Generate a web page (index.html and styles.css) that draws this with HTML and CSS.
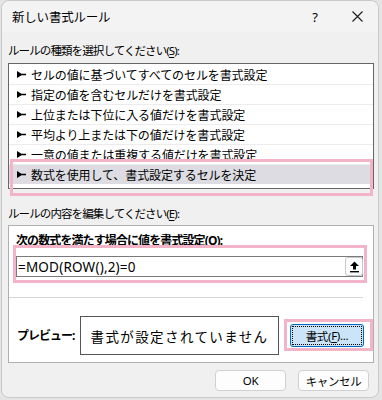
FILE: index.html
```html
<!DOCTYPE html>
<html lang="ja">
<head>
<meta charset="utf-8">
<title>新しい書式ルール</title>
<link rel="stylesheet" href="styles.css">
</head>
<body>
<div class="window">
  <div class="titlebar">
    <span class="title">新しい書式ルール</span>
    <span class="tb-help">?</span>
    <span class="tb-close">
      <svg width="11" height="11" viewBox="0 0 11 11"><path d="M0.5 0.5 L10.5 10.5 M10.5 0.5 L0.5 10.5" stroke="#1a1a1a" stroke-width="1.1" fill="none"/></svg>
    </span>
  </div>
  <div class="content">
    <div class="label l1">ルールの種類を選択してください(<u>S</u>):</div>
    <div class="list">
      <div class="row"><svg class="arr" width="9" height="7" viewBox="0 0 9 7"><path d="M0 0 L4.5 2.8 H9 V4.2 H4.5 L0 7 Z" fill="#000"/></svg><span>セルの値に基づいてすべてのセルを書式設定</span></div>
      <div class="row"><svg class="arr" width="9" height="7" viewBox="0 0 9 7"><path d="M0 0 L4.5 2.8 H9 V4.2 H4.5 L0 7 Z" fill="#000"/></svg><span>指定の値を含むセルだけを書式設定</span></div>
      <div class="row"><svg class="arr" width="9" height="7" viewBox="0 0 9 7"><path d="M0 0 L4.5 2.8 H9 V4.2 H4.5 L0 7 Z" fill="#000"/></svg><span>上位または下位に入る値だけを書式設定</span></div>
      <div class="row"><svg class="arr" width="9" height="7" viewBox="0 0 9 7"><path d="M0 0 L4.5 2.8 H9 V4.2 H4.5 L0 7 Z" fill="#000"/></svg><span>平均より上または下の値だけを書式設定</span></div>
      <div class="row"><svg class="arr" width="9" height="7" viewBox="0 0 9 7"><path d="M0 0 L4.5 2.8 H9 V4.2 H4.5 L0 7 Z" fill="#000"/></svg><span>一意の値または重複する値だけを書式設定</span></div>
      <div class="row sel"><svg class="arr" width="9" height="7" viewBox="0 0 9 7"><path d="M0 0 L4.5 2.8 H9 V4.2 H4.5 L0 7 Z" fill="#000"/></svg><span>数式を使用して、書式設定するセルを決定</span></div>
    </div>
    <div class="label l2">ルールの内容を編集してください(<u>E</u>):</div>
    <div class="group">
      <div class="blabel">次の数式を満たす場合に値を書式設定(<u>O</u>):</div>
      <div class="input">
        <span class="formula">=MOD(ROW(),2)=0</span>
        <span class="refbtn">
          <svg width="11" height="12" viewBox="0 0 11 12"><path d="M5.5 0.5 L10 5 H7 V8.5 H4 V5 H1 Z" fill="#000"/><rect x="1" y="10" width="9" height="1.4" fill="#000"/></svg>
        </span>
      </div>
      <div class="sep"></div>
      <div class="preview-row">
        <span class="blabel pl">プレビュー:</span>
        <div class="preview">書式が設定されていません</div>
        <div class="fmtbtn"><span class="focus">書式(<u>F</u>)...</span></div>
      </div>
    </div>
    <div class="buttons">
      <div class="btn">OK</div>
      <div class="btn">キャンセル</div>
    </div>
  </div>
  <div class="mark m1"></div>
  <div class="mark m2"></div>
  <div class="mark m3"></div>
</div>
</body>
</html>
```
FILE: styles.css
```css
html, body {
  margin: 0;
  padding: 0;
}
body {
  background: #e4e4e4;
  width: 382px;
  height: 400px;
  overflow: hidden;
  font-family: "Noto Sans", "Noto Sans CJK JP", sans-serif;
  color: #000;
}
.window {
  position: relative;
  margin-left: 1px;
  width: 376px;
  height: 396px;
  background: #f0f0f0;
  border: 1px solid #c9c9c9;
  border-radius: 8px;
  box-sizing: content-box;
}
.titlebar {
  height: 31px;
  display: flex;
  align-items: center;
  background: #f3f3f3;
  border-radius: 8px 8px 0 0;
}
.title {
  margin-left: 10px;
  font-size: 12.5px;
  letter-spacing: -0.2px;
  flex: 1;
  padding-bottom: 1px;
}
.tb-help {
  font-size: 13px;
  width: 20px;
  text-align: center;
  margin-right: 27px;
}
.tb-close {
  display: flex;
  margin-right: 15px;
}
.content {
  padding: 0 4px 0 6px;
}
.label {
  font-size: 11.5px;
  line-height: 16px;
  letter-spacing: -0.9px;
  margin-left: 0;
}
.l1 { margin-top: 11px; }
.l2 { margin-top: 17px; }
u { text-underline-offset: 2px; }
.list {
  margin-top: 4px;
  height: 121px;
  border: 1px solid #666;
  background: #fff;
  padding: 1px 0 2px 0;
}
.row {
  height: 19px;
  border-bottom: 1px solid #ececec;
  display: flex;
  align-items: center;
  padding-left: 8px;
  font-size: 12px;
  letter-spacing: -0.1px;
}
.row .arr {
  margin-right: 5px;
  flex: none;
}
.row.sel {
  background: #dcdce2;
  border-bottom: none;
  height: 19px;
}
.group {
  margin-top: 3px;
  height: 136px;
  border: 1px solid #b0b0b0;
  background: #fff;
}
.blabel {
  font-size: 12px;
  font-weight: bold;
  line-height: 16px;
  letter-spacing: -0.9px;
}
.group > .blabel {
  margin: 7px 0 0 7px;
}
.input {
  margin: 7px 10px 0 7px;
  height: 19px;
  border: 1px solid #7a7a7a;
  display: flex;
  align-items: center;
  justify-content: space-between;
}
.formula {
  font-size: 13.5px;
  padding-left: 1px;
  letter-spacing: 0.2px;
}
.refbtn {
  width: 18px;
  height: 19px;
  border: 1px solid #c8c8c8;
  border-radius: 3px;
  background: #fdfdfd;
  display: flex;
  align-items: center;
  justify-content: center;
  margin-right: -1px;
  box-sizing: border-box;
}
.sep {
  margin: 20px 10px 0 0;
  height: 1px;
  background: #d5d5d5;
}
.preview-row {
  margin-top: 18px;
  display: flex;
  align-items: center;
}
.pl {
  margin-left: 8px;
  width: 63px;
  letter-spacing: -1px;
}
.preview {
  width: 197px;
  height: 37px;
  border: 1px solid #555;
  display: flex;
  align-items: center;
  justify-content: center;
  font-size: 13.5px;
  letter-spacing: 1.4px;
}
.fmtbtn {
  margin-left: 11px;
  width: 70px;
  height: 19px;
  border: 1px solid #0067c0;
  border-radius: 3px;
  background: #cce4f7;
  display: flex;
  align-items: center;
  justify-content: center;
  padding: 1px;
  box-sizing: content-box;
}
.focus {
  flex: 1;
  align-self: stretch;
  border: 1px dotted #000;
  display: flex;
  align-items: center;
  justify-content: center;
  font-size: 11.5px;
  letter-spacing: -0.3px;
}
.buttons {
  margin-top: 7px;
  display: flex;
  justify-content: flex-end;
  gap: 12px;
  padding-right: 5px;
}
.btn {
  width: 69px;
  height: 19px;
  border: 1px solid #d0d0d0;
  border-radius: 4px;
  background: #fdfdfd;
  display: flex;
  align-items: center;
  justify-content: center;
  font-size: 11.5px;
  letter-spacing: -0.4px;
}
.mark {
  position: absolute;
  border: 3px solid #f4b4c8;
  box-sizing: border-box;
}
.m1 { left: 8px; top: 158px; width: 363px; height: 37px; }
.m2 { left: 11px; top: 244px; width: 354px; height: 38px; }
.m3 { left: 282px; top: 318px; width: 89px; height: 32px; }
```
